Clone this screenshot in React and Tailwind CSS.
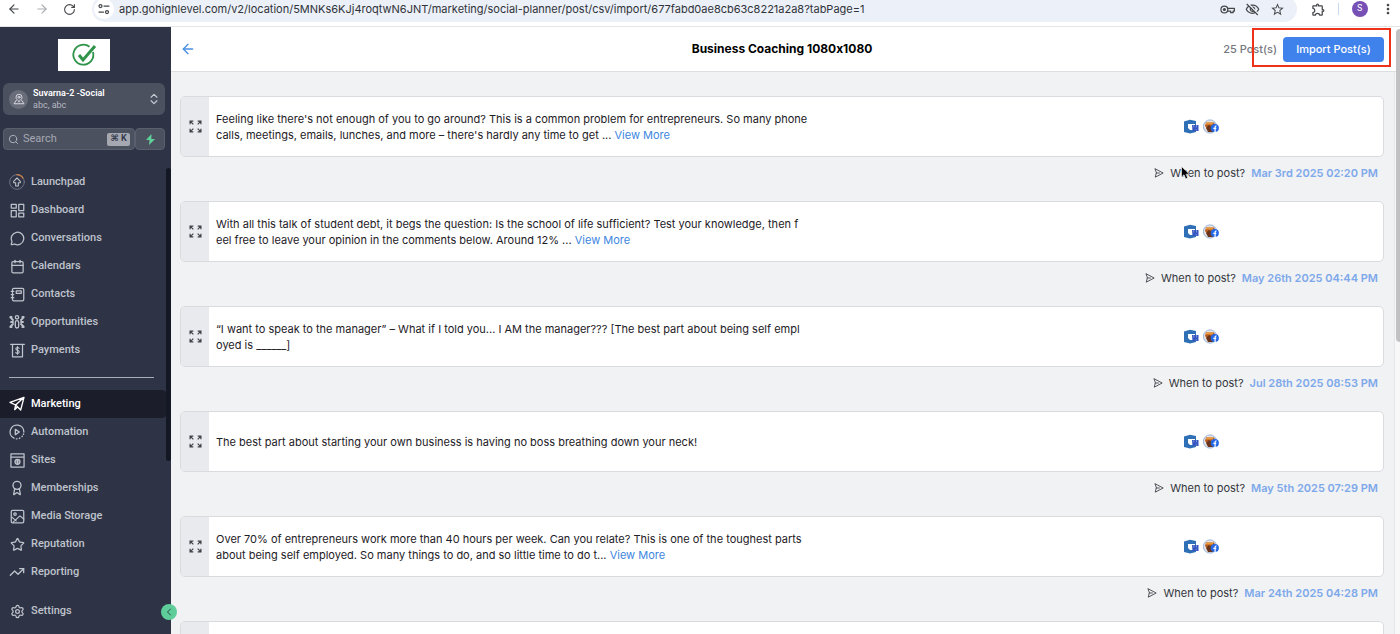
import React, { useState } from "react";
import {
  ArrowLeft,
  ArrowRight,
  Award,
  Calendar,
  ChevronLeft,
  ChevronsUpDown,
  MessageCircle,
  RotateCw,
  Search,
  Settings,
  Star,
  TrendingUp,
} from "lucide-react";
import { MdMoreVert, MdOutlineExtension, MdOutlineStarBorder, MdOutlineVisibilityOff } from "react-icons/md";

function Svg({ children, size = 15, ...props }) {
  return (
    <svg
      width={size}
      height={size}
      viewBox="0 0 24 24"
      fill="none"
      stroke="currentColor"
      strokeWidth="2"
      strokeLinecap="round"
      strokeLinejoin="round"
      aria-hidden
      {...props}
    >
      {children}
    </svg>
  );
}

const LaunchpadIcon = () => (
  <Svg size={16}>
    <circle cx="12" cy="12" r="11" strokeWidth="1.4" stroke="#737a8b" />
    <path d="M12 1a11 11 0 0 1 9 5" stroke="#c9814a" />
    <path d="M12 6 7 11v2h3v5h4v-5h3v-2z" strokeWidth="1.6" />
  </Svg>
);

const DashboardIcon = () => (
  <Svg>
    <rect x="2" y="2" width="8" height="6" />
    <rect x="14" y="2" width="8" height="10" />
    <rect x="2" y="12" width="8" height="10" />
    <rect x="14" y="16" width="8" height="6" />
  </Svg>
);

const ContactsIcon = () => (
  <Svg>
    <rect x="4" y="2" width="18" height="20" rx="2" />
    <rect x="10" y="6" width="8" height="4" />
    <path d="M2 7h4M2 12h4M2 17h4" />
  </Svg>
);

const OpportunitiesIcon = () => (
  <Svg size={16}>
    <circle cx="12" cy="5" r="2.5" />
    <rect x="9.5" y="10" width="5" height="11" rx="2.5" />
    <path d="M2 4.5h2M20 4.5h2M2 19.5h2M20 19.5h2M2 5l4 4M22 5l-4 4M2 19l4-4M22 19l-4-4M3 12h3M18 12h3" strokeWidth="2.8" />
  </Svg>
);

const PaymentsIcon = () => (
  <Svg>
    <path d="M1 2h22M4 2v20h16V2" />
    <path d="M14.5 8.5c-.5-1-1.5-1.3-2.5-1.3-3.5 0-3.3 4.3 0 4.5 3.6.3 3.5 4.8 0 4.8-1.2 0-2.2-.4-2.7-1.4M12 5.5V18" strokeWidth="1.8" />
  </Svg>
);

const MarketingIcon = () => (
  <Svg size={16}>
    <path d="M22.5 2 1.5 9.5l8.500 4zM22.5 2l-5 19-7.500-7.500M10 13.500l-1.500 7 4-4" />
  </Svg>
);

const AutomationIcon = () => (
  <Svg size={16}>
    <path d="M7.5 21.2A10.3 10.3 0 1 1 22.3 12" />
    <path d="M11 22.3h1M15.5 21.5l.8-.4M19.5 18.8l.5-.6M21.6 15.5l.3-.6" />
    <path d="m9.500 8 6 4-6 4z" />
  </Svg>
);

const SitesIcon = () => (
  <Svg>
    <rect x="1.5" y="1.5" width="21" height="21" />
    <path d="M2 6.5h20" />
    <circle cx="12" cy="14" r="4" fill="currentColor" fillOpacity=".5" />
    <path d="M12 11v6" />
  </Svg>
);

const MediaIcon = () => (
  <Svg>
    <rect x="2" y="2" width="20" height="20" rx="2" />
    <circle cx="8" cy="8" r="2" />
    <path d="m5 21 11-10 6 5M3 13l7 6" />
  </Svg>
);

const LocationIcon = () => (
  <Svg size={12}>
    <circle cx="12" cy="8.5" r="2" />
    <path d="M12 17c-4-3.500-6-5.500-6-8.500a6 6 0 0 1 12 0c0 3-2 5-6 8.500z" />
    <path d="M6.5 15 2 21.500h20L17.500 15" />
  </Svg>
);

const KeyIcon = () => (
  <Svg size={15}>
    <circle cx="7" cy="12" r="5.5" />
    <circle cx="7" cy="12" r="1.5" fill="currentColor" />
    <path d="M12 10h11v4.500h-2V17h-4v-2.500h-5" />
  </Svg>
);

const TuneIcon = () => (
  <Svg size={12} strokeWidth="2.5">
    <circle cx="5" cy="6" r="3" />
    <path d="M12 6h10M2 18h9" />
    <circle cx="18" cy="18" r="3" />
  </Svg>
);

// four short arrows pointing at the corners
const ExpandIcon = () => (
  <Svg size={13} strokeWidth="2.2" strokeLinecap="butt" strokeLinejoin="miter">
    <path d="M2 8V2h6M2 2l6 6M16 2h6v6M22 2l-6 6M2 16v6h6M2 22l6-6M22 16v6h-6M22 22l-6-6" />
  </Svg>
);

const SendIcon = () => (
  <Svg size={10}>
    <path d="M3 2 22 12 3 22l2.500-10zM5.500 12H13" />
  </Svg>
);

function BusinessIcon() {
  return (
    <svg width="16" height="16" viewBox="0 0 16 16" aria-hidden>
      <path d="M1 2.500 7 .8l6 1.200v11L7 14.500 1 13z" fill="#2f6fb5" />
      <path d="M5 5h7v6H7L5 9z" fill="#fff" />
      <path d="M9 6h6.500v6H9.500z" fill="#3455bf" />
      <path d="M10.800 6v2.500M13.500 6v2.500M12.500 10.800h1.500" stroke="#91a7e7" strokeWidth=".7" />
    </svg>
  );
}

function FacebookPageIcon() {
  return (
    <svg width="16" height="16" viewBox="0 0 16 16" aria-hidden>
      <circle cx="7" cy="7.500" r="6.600" fill="#e9e4e3" stroke="#8cacd8" strokeWidth=".9" />
      <path d="M3 3.500h8l1 2-2 5H5L2 7z" fill="#b45a20" />
      <path d="M3 3.500h7v2H3z" fill="#e99a3b" />
      <path d="m3 9 3-3 5 4-1 3H5z" fill="#69351d" />
      <circle cx="11.800" cy="9" r="4.100" fill="#2468e6" />
      <path d="M12.100 13V8.300c0-1 .5-1.400 1.500-1.300M10.300 9.400h3" stroke="#fff" strokeWidth="1.200" fill="none" />
    </svg>
  );
}

const primaryNav = [
  { label: "Launchpad", icon: <LaunchpadIcon /> },
  { label: "Dashboard", icon: <DashboardIcon /> },
  { label: "Conversations", icon: <MessageCircle size={15} /> },
  { label: "Calendars", icon: <Calendar size={15} /> },
  { label: "Contacts", icon: <ContactsIcon /> },
  { label: "Opportunities", icon: <OpportunitiesIcon /> },
  { label: "Payments", icon: <PaymentsIcon /> },
];

const secondaryNav = [
  { label: "Marketing", icon: <MarketingIcon />, active: true },
  { label: "Automation", icon: <AutomationIcon /> },
  { label: "Sites", icon: <SitesIcon /> },
  { label: "Memberships", icon: <Award size={16} /> },
  { label: "Media Storage", icon: <MediaIcon /> },
  { label: "Reputation", icon: <Star size={15} /> },
  { label: "Reporting", icon: <TrendingUp size={16} /> },
];

const posts = [
  {
    id: 1,
    lines: [
      "Feeling like there's not enough of you to go around? This is a common problem for entrepreneurs. So many phone",
      "calls, meetings, emails, lunches, and more – there's hardly any time to get ...",
    ],
    more: true,
    date: "Mar 3rd 2025 02:20 PM",
  },
  {
    id: 2,
    lines: [
      "With all this talk of student debt, it begs the question: Is the school of life sufficient? Test your knowledge, then f",
      "eel free to leave your opinion in the comments below. Around 12% ...",
    ],
    more: true,
    date: "May 26th 2025 04:44 PM",
  },
  {
    id: 3,
    lines: [
      "“I want to speak to the manager” – What if I told you... I AM the manager??? [The best part about being self empl",
      "oyed is ______]",
    ],
    date: "Jul 28th 2025 08:53 PM",
  },
  {
    id: 4,
    lines: ["The best part about starting your own business is having no boss breathing down your neck!"],
    date: "May 5th 2025 07:29 PM",
  },
  {
    id: 5,
    lines: [
      "Over 70% of entrepreneurs work more than 40 hours per week. Can you relate? This is one of the toughest parts",
      "about being self employed. So many things to do, and so little time to do t...",
    ],
    more: true,
    date: "Mar 24th 2025 04:28 PM",
  },
  { id: 6, lines: [] },
];

function BrowserBar() {
  return (
    <div className="h-[27px] shrink-0 overflow-hidden border-b border-[#e4e4e6] bg-white">
      <div className="-mt-1 flex h-[26px] items-center text-[#45474a]">
        <div className="flex w-[92px] shrink-0 items-center gap-3 pl-[7px]">
          <button aria-label="Back"><ArrowLeft size={14} /></button>
          <button aria-label="Forward" className="pl-[2px] text-[#a9abae]"><ArrowRight size={14} /></button>
          <button aria-label="Reload" className="pl-[2px]"><RotateCw size={13} /></button>
        </div>
        <div className="flex h-[26px] min-w-0 flex-1 items-center rounded-full bg-[#ebf0f9] pl-[2px] pr-3">
          <button aria-label="Site information" className="flex size-[20px] shrink-0 items-center justify-center rounded-full bg-white">
            <TuneIcon />
          </button>
          <input
            aria-label="Address"
            readOnly
            value="app.gohighlevel.com/v2/location/5MNKs6KJj4roqtwN6JNT/marketing/social-planner/post/csv/import/677fabd0ae8cb63c8221a2a8?tabPage=1"
            className="min-w-0 flex-1 bg-transparent pl-[5px] text-[11px] text-[#303338] outline-none"
          />
          <div className="flex items-center gap-[10px]">
            <button aria-label="Passwords"><KeyIcon /></button>
            <button aria-label="Third-party cookies"><MdOutlineVisibilityOff size={15} /></button>
            <button aria-label="Bookmark"><MdOutlineStarBorder size={15} /></button>
          </div>
        </div>
        <div className="flex w-[103px] shrink-0 items-center justify-between pl-[14px] pr-[4px]">
          <button aria-label="Extensions"><MdOutlineExtension size={15} /></button>
          <span className="h-3 w-px bg-[#c9d8f2]" />
          <button className="flex size-[16px] items-center justify-center rounded-full bg-[#7650b4] font-['Roboto',sans-serif] text-[9px] text-white">
            S
          </button>
          <button aria-label="Menu"><MdMoreVert size={16} /></button>
        </div>
      </div>
    </div>
  );
}

function NavItem({ label, icon, active }) {
  return (
    <li>
      <a
        href="#"
        aria-current={active ? "page" : undefined}
        className={`flex h-7 items-center gap-[6px] rounded-r-[4px] pl-[9px] text-[11px] font-medium ${
          active ? "bg-[#1b1d2a] text-white" : "text-[#bfc3cc]"
        }`}
      >
        <span className="flex w-4 shrink-0 justify-center">{icon}</span>
        {label}
      </a>
    </li>
  );
}

function Sidebar() {
  return (
    <aside className="relative flex w-[171px] shrink-0 flex-col bg-[#2e3346] font-['Roboto',sans-serif]">
      <div className="flex flex-col px-[3px] pt-3 pr-[6px]">
        <div className="flex h-8 w-[52px] items-center justify-center self-center bg-white">
          <svg width="26" height="26" viewBox="0 0 26 26" fill="none" stroke="#2f9349" aria-hidden>
            <path d="M22 10a10 10 0 1 1-3.500-5.200" strokeWidth="1.800" />
            <path d="m8 13 4 5L24 4" strokeWidth="3" />
          </svg>
        </div>
        <button className="mt-3 flex h-8 items-center gap-[5px] rounded-[6px] bg-[#4c5160] pr-[4px] pl-[6px] text-left">
          <span className="flex size-[19px] items-center justify-center rounded-full bg-[#696d7a] text-[#d6d8dd]">
            <LocationIcon />
          </span>
          <span className="flex-1 text-[9px] leading-[12px]">
            <span className="block font-semibold text-white">Suvarna-2 -Social</span>
            <span className="block text-[#b5b8c1]">abc, abc</span>
          </span>
          <ChevronsUpDown size={14} className="text-[#c8cbd2]" />
        </button>
        <div className="mt-[13px] flex h-[22px]">
          <div className="flex min-w-0 flex-1 items-center rounded-[4px] border border-[#5a5f6e] bg-[#4c5160] px-1">
            <Search size={11} className="shrink-0 text-[#b5b8c1]" />
            <input
              aria-label="Search"
              placeholder="Search"
              className="min-w-0 flex-1 bg-transparent pl-1 text-[11px] text-white placeholder-[#a5a8b2] outline-none"
            />
            <kbd className="flex h-[13px] w-[23px] shrink-0 items-center justify-center rounded-[2px] bg-[#a5a8b1] font-['Roboto','DejaVu_Sans',sans-serif] text-[9px] font-semibold text-[#2e3346]">
              ⌘ K
            </kbd>
          </div>
          <button aria-label="Quick actions" className="flex w-[30px] items-center justify-center rounded-[4px] border border-[#5a5f6e] bg-[#4c5160]">
            <svg width="9" height="11" viewBox="0 0 9 11" fill="#5fd19b" aria-hidden>
              <path d="M5.500 0 0 6h3.500L3 11l6-6H5.300z" />
            </svg>
          </button>
        </div>
      </div>

      <div className="mt-[18px] flex">
        <nav className="w-[166px]">
          <ul>
            {primaryNav.map((item) => (
              <NavItem key={item.label} {...item} />
            ))}
          </ul>
          <hr className="mt-[13px] mr-3 mb-3 ml-[9px] border-[#a9adb8]" />
          <ul>
            {secondaryNav.map((item) => (
              <NavItem key={item.label} {...item} />
            ))}
          </ul>
          <ul className="mt-[11px]">
            <NavItem label="Settings" icon={<Settings size={15} />} />
          </ul>
        </nav>
        <div className="h-[293px] flex-1 rounded-full bg-[#141724]" />
      </div>

      <button
        aria-label="Collapse sidebar"
        className="absolute -right-[6px] bottom-[14px] z-10 flex size-[16px] items-center justify-center rounded-full bg-[#5fcd9a] text-[#264a46]"
      >
        <ChevronLeft size={12} />
      </button>
    </aside>
  );
}

function PostRow({ lines, more, date }) {
  return (
    <li>
      <article className="flex h-[61px] overflow-hidden rounded-[5px] border border-[#d9dbdf] bg-white">
        <button aria-label="Expand post" className="flex w-7 shrink-0 items-center justify-center bg-[#e9eaee] text-[#3d4047]">
          <ExpandIcon />
        </button>
        <p className="flex-1 self-center pl-[7px] text-[11px] leading-[16px] whitespace-nowrap text-[#1d2026]">
          {lines.map((line, i) => (
            <span key={i} className="block">
              {line}
              {more && i === lines.length - 1 && (
                <>
                  {" "}
                  <a href="#" className="text-[#3d86e0]">View More</a>
                </>
              )}
            </span>
          ))}
        </p>
        <div className="flex w-[200px] shrink-0 items-center gap-1">
          <BusinessIcon />
          <FacebookPageIcon />
        </div>
      </article>
      {date && (
        <div className="flex h-[44px] items-start justify-end pt-2 pr-[6px] text-[11px] leading-[16px] text-[#33363d]">
          <span className="flex items-center gap-[6px]">
            <SendIcon />
            When to post?
          </span>
          <time className="ml-[6px] font-semibold text-[#7da8ea]">{date}</time>
        </div>
      )}
    </li>
  );
}

export default function App() {
  const [count] = useState(25);

  return (
    <div className="relative flex h-screen flex-col overflow-hidden bg-[#f1f2f4] font-['Inter',sans-serif]">
      <BrowserBar />
      <div className="flex min-h-0 flex-1">
        <Sidebar />
        <main className="flex min-w-0 flex-1 flex-col">
          <header className="flex h-[45px] shrink-0 items-center border-b border-[#dcdee1] bg-white pr-4 pl-[9px]">
            <div className="flex-1">
              <button aria-label="Go back" className="block text-[#4a8fe2]"><ArrowLeft size={16} /></button>
            </div>
            <h1 className="text-[12px] font-bold text-black [font-feature-settings:'calt'_0]">Business Coaching 1080x1080</h1>
            <div className="flex flex-1 items-center justify-end gap-[6px] text-[11px] font-medium">
              <span className="text-[#75777e]">{count} Post(s)</span>
              <div className="relative">
                <button className="h-[25px] w-[101px] rounded-[4px] bg-[#3f82ec] text-white">Import Post(s)</button>
                <div className="pointer-events-none absolute -top-[9px] -right-[7px] h-[39px] w-[139px] border-2 border-[#ee3219]" />
              </div>
            </div>
          </header>
          <div className="flex min-h-0 flex-1">
            <ul className="min-w-0 flex-1 overflow-hidden pt-6 pr-[10px] pl-[9px]">
              {posts.map((post) => (
                <PostRow key={post.id} {...post} />
              ))}
            </ul>
            <div className="w-[6px] border-l border-[#e6e7e9] bg-[#f8f8f9]" />
          </div>
        </main>
      </div>
      <div className="absolute top-[29px] right-0 h-[313px] w-1 rounded-l-full bg-[#c1c1c3]" />
      <svg className="pointer-events-none absolute top-[166px] left-[1181px]" width="9" height="14" viewBox="0 0 9 14" aria-hidden>
        <path d="M.5.500v10.500l2.500-2.200 1.700 4 2-.9L5 8.200h3.500z" fill="#000" stroke="#fff" strokeWidth=".6" />
      </svg>
    </div>
  );
}
